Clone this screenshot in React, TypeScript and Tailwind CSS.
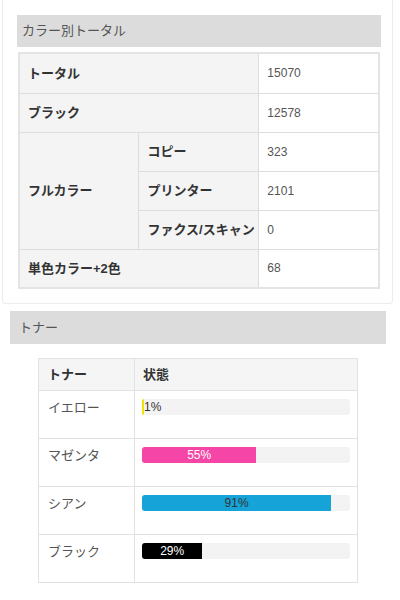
const jp = { fontFamily: '"Liberation Sans", "Noto Sans CJK JP", sans-serif' };

const toners = [
  { name: "イエロー", pct: 1, fill: "bg-[#f2e400]", text: "text-[#333]" },
  { name: "マゼンタ", pct: 55, fill: "bg-[#f545a6]", text: "text-white" },
  { name: "シアン", pct: 91, fill: "bg-[#16a3d8]", text: "text-[#333]" },
  { name: "ブラック", pct: 29, fill: "bg-black", text: "text-white" },
];

function Bar({ pct, fill, text }: { pct: number; fill: string; text: string }) {
  return (
    <div className="h-[16px] w-[208px] rounded-[3px] bg-[#f3f3f3] relative">
      <div
        className={`h-full rounded-l-[3px] ${fill}`}
        style={{ width: `${Math.max(pct * 2.08, 2)}px` }}
      />
      {pct < 5 ? (
        <span className={`absolute left-[2px] top-0 text-[12px] leading-[16px] ${text}`}>{pct}%</span>
      ) : (
        <span
          className={`absolute left-0 top-0 text-center text-[12px] leading-[16px] ${text}`}
          style={{ width: `${pct * 2.08}px` }}
        >
          {pct}%
        </span>
      )}
    </div>
  );
}

export default function App() {
  const label = "bg-[#f4f4f4] border border-[#ddd] pl-[8px] font-bold text-[13px] text-[#333] text-left";
  const value = "bg-white border border-[#ddd] pl-[8px] text-[12px] text-[#555] text-left";

  return (
    <div className="w-[400px] h-[600px] bg-white overflow-hidden" style={jp}>
      {/* カラー別トータル */}
      <div className="ml-[2px] w-[391px] border border-t-0 border-[#ececec] rounded-b-[4px] pl-[14px] pt-[15px] pb-[14px]">
        <div className="w-[364px] h-[32px] bg-[#dcdcdc] pl-[5px] flex items-center text-[13px] text-[#555]">
          カラー別トータル
        </div>
        <table className="ml-[1px] mt-[5px] w-[362px] border-collapse border-2 border-[#e4e4e4]">
          <tbody>
            <tr className="h-[40px]">
              <td colSpan={2} className={label}>トータル</td>
              <td className={`${value} w-[121px]`}>15070</td>
            </tr>
            <tr className="h-[39px]">
              <td colSpan={2} className={label}>ブラック</td>
              <td className={value}>12578</td>
            </tr>
            <tr className="h-[39px]">
              <td rowSpan={3} className={`${label} w-[121px]`}>フルカラー</td>
              <td className={`${label} w-[120px]`}>コピー</td>
              <td className={value}>323</td>
            </tr>
            <tr className="h-[39px]">
              <td className={label}>プリンター</td>
              <td className={value}>2101</td>
            </tr>
            <tr className="h-[39px]">
              <td className={`${label} whitespace-nowrap`}>ファクス/スキャン</td>
              <td className={value}>0</td>
            </tr>
            <tr className="h-[39px]">
              <td colSpan={2} className={label}>単色カラー+2色</td>
              <td className={value}>68</td>
            </tr>
          </tbody>
        </table>
      </div>

      {/* トナー */}
      <div className="ml-[10px] mt-[7px] w-[376px] h-[33px] bg-[#dcdcdc] pl-[9px] flex items-center text-[13px] text-[#555]">
        トナー
      </div>
      <table className="ml-[38px] mt-[14px] w-[320px] border-collapse border border-[#e2e2e2]">
        <thead>
          <tr className="h-[32px] bg-[#f5f5f5]">
            <th className="w-[96px] border border-[#e2e2e2] pl-[9px] text-left text-[13px] font-bold text-[#333]">トナー</th>
            <th className="border border-[#e2e2e2] pl-[8px] text-left text-[13px] font-bold text-[#333]">状態</th>
          </tr>
        </thead>
        <tbody>
          {toners.map((t) => (
            <tr key={t.name} className="h-[48px]">
              <td className="border border-[#e2e2e2] pl-[9px] pt-[7px] align-top text-[13px] text-[#555]">{t.name}</td>
              <td className="border border-[#e2e2e2] pl-[7px] pt-[8px] align-top">
                <Bar pct={t.pct} fill={t.fill} text={t.text} />
              </td>
            </tr>
          ))}
        </tbody>
      </table>
    </div>
  );
}
